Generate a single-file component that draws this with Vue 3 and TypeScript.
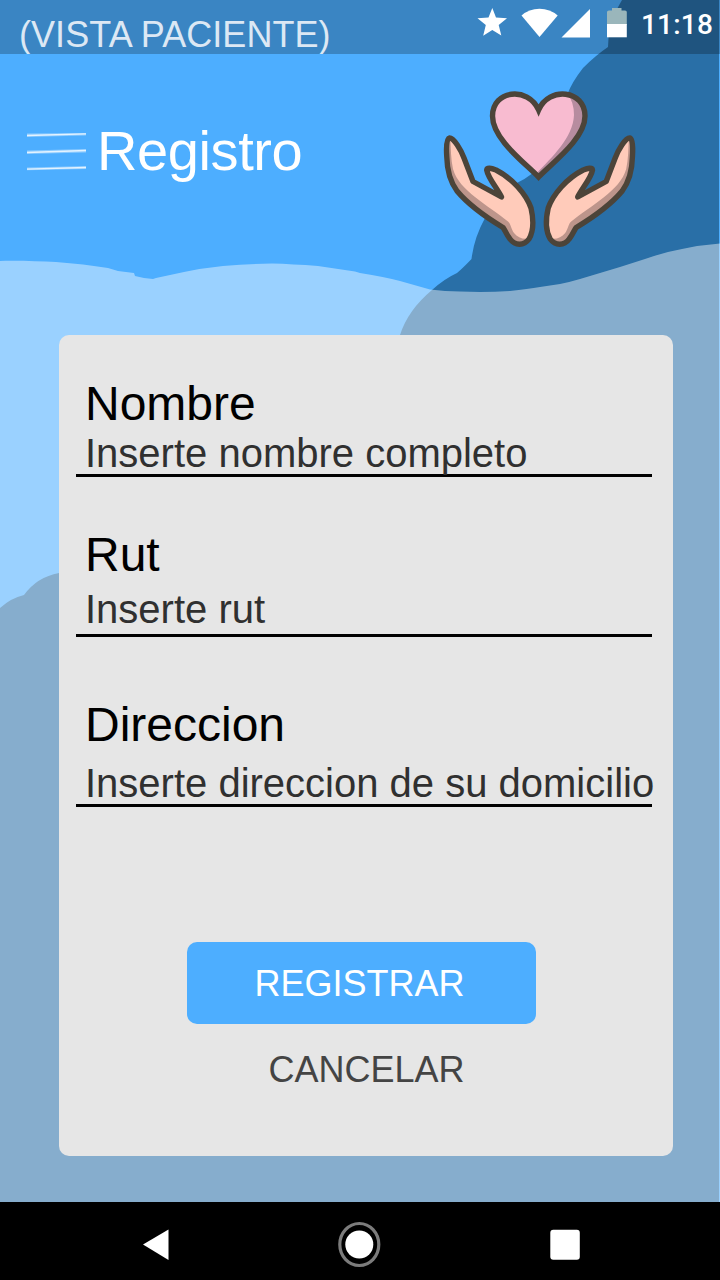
<script setup lang="ts">
interface Field {
  id: string
  label: string
  hint: string
}

const fields: Field[] = [
  { id: 'nombre', label: 'Nombre', hint: 'Inserte nombre completo' },
  { id: 'rut', label: 'Rut', hint: 'Inserte rut' },
  { id: 'direccion', label: 'Direccion', hint: 'Inserte direccion de su domicilio' },
]
</script>

<template>
  <div class="screen">
    <svg class="backdrop" viewBox="0 0 720 1280" aria-hidden="true">
      <rect width="720" height="1280" fill="#4daeff" />
      <path
        fill="#296fa7"
        d="M622 0C616 11 610 20 609 30L608 47Q596 55 583 68Q572 82 567 95C560 125 550 160 533 173Q524 180 515 184Q495 200 485 218Q474 238 471.500 259Q463 268 457 273Q444 279 432 290Q408 310 400 335L390 573L59 573Q37 577 24 595Q11 598 0 608V1203H719V0Z"
      />
      <path
        fill="#ffffff"
        fill-opacity="0.435"
        d="M0 261C20 260.500 40 261.500 56 262Q84 264 108 268L118 271L134 273L135 276Q144 278.500 153 279L156 278L184 272Q203 268 223 266Q250 264 272 263.500Q292 264 318 266L355 271.500L360 273Q385 277 400 281L430 289.500Q445 291.500 460 291.500Q485 292.500 510 291Q528 289 540 287L560 284Q570 282 580 279L600 273L620 267L645 259Q665 252 682 249Q700 245 720 243.500V1203H0Z"
      />
    </svg>

    <header class="status">
      <span class="status-title">(VISTA PACIENTE)</span>
      <svg class="status-icons" width="152" height="54" viewBox="476 0 152 54" aria-hidden="true">
        <path fill="#fff" d="M492.300 8L496 17.500L507 18.300L498.700 25L501.300 35.500L492.300 30L483.200 35.800L485.800 25L477.500 18.300L488.500 17.500Z" />
        <path fill="#fff" d="M539.500 37L521.500 15.500Q529 8.700 539.500 8.700T557.700 15.500Z" />
        <path fill="#fff" d="M590 9V37.500H561.500Z" />
        <path fill="#9ab6bb" d="M607 12Q607 10.500 609 10.500H612V8H621.500V10.500H625Q626.800 10.500 626.800 12V25H607Z" />
        <path fill="#fff" d="M607 24H626.800V37.300H607Z" />
      </svg>
      <span class="clock">11:18</span>
    </header>

    <section class="toolbar">
      <svg class="menu" width="60" height="40" viewBox="27 132 60 40" aria-hidden="true">
        <g fill="#8bcaff">
          <path d="M27 133.500L86 133V135.500L27 137Z" />
          <path d="M27 150.500L86 149V152.500L27 154Z" />
          <path d="M27 167.500L86 166V169L27 170.300Z" />
        </g>
        <path stroke="#e4f3ff" stroke-width="1.300" d="M27 135.500L86 133.800M27 152.500L86 150.500M27 169.200L86 167.500" />
      </svg>
      <h1 class="title">Registro</h1>
      <svg class="logo" width="196" height="160" viewBox="442 90 196 160" aria-hidden="true">
        <defs>
          <clipPath id="heart-clip">
            <path d="M538.600 177C525 163 492.500 139 492.500 116C492.500 90 528 86 538.600 110C549 86 585 90 585 116C585 139 552 163 538.600 177Z" />
          </clipPath>
          <path
            id="hand"
            d="M446.800 157C446 146 446.500 138.500 449.500 138C454 138 461 150 464 158L473 181.500L501.500 197C497 188 488 178 486.700 170C487 167.500 491 168 496 170C512 178 526 194 531 208C534 221 533 232 529 239C524 246 515 246 510 239C506 234 505 230 503 227.500C484 216 467 203 457 191C449 180 447 168 446.800 157Z"
          />
          <clipPath id="hand-clip"><use href="#hand" /></clipPath>
          <g id="palm">
            <use href="#hand" fill="#bd958b" />
            <path
              clip-path="url(#hand-clip)"
              fill="#ffcbba"
              d="M450 134C451 146 450.500 158 453 169C456 180 465 189 475 197C486 206 499 214 508 221.500C511 224 511 229 514 233C518 238 524 240 531 238L540 230V160H480L463 130Z"
            />
            <use href="#hand" fill="none" stroke="#4c4439" stroke-width="5.400" stroke-linejoin="round" />
          </g>
        </defs>
        <g clip-path="url(#heart-clip)">
          <rect x="488" y="90" width="100" height="90" fill="#b78c9f" />
          <path fill="#f8bbd0" d="M485 90H564Q574 99 574 115C573 138 552 157 536 174L485 180Z" />
        </g>
        <path
          fill="none"
          stroke="#4c4439"
          stroke-width="5.400"
          d="M538.600 177C525 163 492.500 139 492.500 116C492.500 90 528 86 538.600 110C549 86 585 90 585 116C585 139 552 163 538.600 177Z"
        />
        <use href="#palm" />
        <use href="#palm" transform="translate(1079.200 0) scale(-1 1)" />
      </svg>
    </section>

    <main class="card">
      <label v-for="field in fields" :key="field.id" class="field" :class="field.id">
        <span class="name">{{ field.label }}</span>
        <span class="hint">{{ field.hint }}</span>
      </label>
      <button class="submit" type="button">REGISTRAR</button>
      <button class="cancel" type="button">CANCELAR</button>
    </main>

    <nav class="navbar">
      <svg width="720" height="78" viewBox="0 1202 720 78" aria-hidden="true">
        <g class="keys">
          <path fill="#fff" d="M143 1244.500L168.500 1229.500V1260Z" />
          <ellipse cx="359.300" cy="1244.500" rx="19.500" ry="21" fill="none" stroke="#7c7c7c" stroke-width="3.200" />
          <circle cx="359.300" cy="1244.500" r="14" fill="#fff" />
          <rect x="550.300" y="1229.800" width="29.500" height="30" rx="3" fill="#fff" />
        </g>
      </svg>
    </nav>
  </div>
</template>

<style>
body {
  margin: 0;
}
</style>

<style scoped>
.screen {
  position: relative;
  width: 720px;
  height: 1280px;
  display: flex;
  flex-direction: column;
  overflow: hidden;
  font-family: "Liberation Sans", Arial, sans-serif;
}
.backdrop {
  position: absolute;
  inset: 0;
  width: 720px;
  height: 1280px;
}
.status,
.toolbar,
.card,
.navbar {
  position: relative;
}
.status {
  height: 54px;
  display: flex;
  box-sizing: border-box;
  padding: 0 7px 0 19px;
  background: rgba(0, 0, 0, 0.235);
  overflow: hidden;
}
.status-title {
  flex: 1;
  padding-top: 17px;
  font-size: 36px;
  line-height: 36px;
  letter-spacing: 0.06px;
  color: #dce8f4;
  white-space: nowrap;
}
.status-icons {
  flex: none;
}
.clock {
  width: 72px;
  margin-left: 13px;
  padding-top: 10px;
  font-family: Roboto, sans-serif;
  font-weight: 500;
  font-size: 28px;
  line-height: 30px;
  letter-spacing: 0.2px;
  color: #fff;
  white-space: nowrap;
}
.toolbar {
  height: 281px;
  display: flex;
  align-items: flex-start;
}
.menu {
  margin: 78px 0 0 27px;
}
.title {
  margin: 69px 0 0 10px;
  width: 335px;
  font-weight: 400;
  font-size: 56px;
  line-height: 56px;
  letter-spacing: -0.4px;
  color: #fff;
}
.logo {
  margin: 36px 0 0 10px;
}
.card {
  box-sizing: border-box;
  width: 614px;
  height: 821px;
  margin-left: 59px;
  padding: 44px 21px 0 17px;
  border-radius: 10px;
  background: #e6e6e6;
  display: flex;
  flex-direction: column;
}
.field {
  box-sizing: border-box;
  display: flex;
  flex-direction: column;
  justify-content: space-between;
  height: 107px;
  padding: 0 0 1px 9px;
  border-bottom: 3px solid #000;
  white-space: nowrap;
}
.nombre {
  height: 98px;
}
.rut {
  margin-top: 53px;
  padding-bottom: 5px;
}
.direccion {
  margin-top: 63px;
}
.name {
  padding-top: 1px;
  font-size: 48px;
  line-height: 48px;
  color: #000;
}
.hint {
  font-size: 40px;
  line-height: 40px;
  color: #303030;
}
.submit,
.cancel {
  display: flex;
  align-items: center;
  justify-content: center;
  box-sizing: border-box;
  border: 0;
  padding: 0;
  font-family: inherit;
  font-size: 36px;
  line-height: 36px;
}
.submit {
  width: 349px;
  height: 82px;
  margin: 135px 0 0 111px;
  padding: 2px 4px 0 0;
  border-radius: 10px;
  background: #4daeff;
  color: #fff;
}
.cancel {
  width: 349px;
  height: 40px;
  margin: 26px 0 0 116px;
  background: none;
  color: #444;
}
.navbar {
  height: 78px;
  margin-top: auto;
  background: #000;
}
.navbar svg {
  display: block;
}
.keys {
  filter: blur(0.7px);
}
</style>
